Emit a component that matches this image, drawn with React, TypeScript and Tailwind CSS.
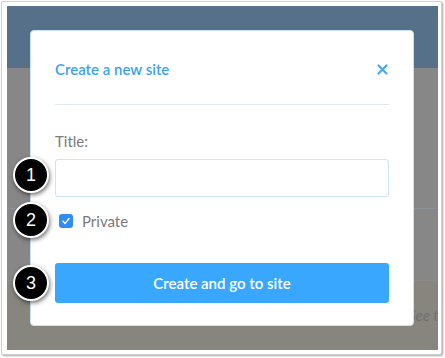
import React from 'react';

const Callout: React.FC<{ n: number; top: string }> = ({ n, top }) => (
  <div
    className={`absolute left-[6px] ${top} w-[36px] h-[36px] rounded-full bg-black border-2 border-white shadow-[1px_2px_4px_rgba(0,0,0,0.55)] flex items-center justify-center text-white text-[18px] font-['Liberation_Sans',sans-serif]`}
  >
    {n}
  </div>
);

const App: React.FC = () => {
  return (
    <div className="w-[445px] h-[358px] bg-white pl-[1px] pt-[1px] font-['Lato',sans-serif]">
      <div className="w-[441px] h-[354px] bg-white border border-[#cfcfcf] rounded-[2px] shadow-[1px_1px_2px_rgba(0,0,0,0.35)] pl-[5px] pt-[4px]">
        <div className="relative w-[431px] h-[344px] overflow-hidden bg-[#878787]">
          {/* page behind the dialog */}
          <div className="h-[62px] bg-[#557088]" />
          <div className="h-[140px]" />
          <div className="h-[72px] border-t border-[#8a9099]" />
          <div className="h-[70px] border-t border-[#8c8c84] bg-[#86867f] pl-[401px] pt-[23px] text-[15px] italic text-[#707070] whitespace-nowrap">
            See the
          </div>

          {/* dialog */}
          <div className="absolute left-[23px] top-[24px] w-[384px] h-[296px] bg-white border border-[#c9e2f6] rounded-[4px] px-[24px]">
            <div className="flex items-center justify-between pt-[29px] pb-[26px] border-b border-[#dfe8ef]">
              <span className="text-[15px] leading-[18px] font-semibold text-[#3ba2f2]">Create a new site</span>
              <svg width="11" height="11" viewBox="0 0 11 11" className="mr-[1px]">
                <path d="M1.5 1.5 L9.5 9.5 M9.5 1.5 L1.5 9.5" stroke="#4ba7f2" strokeWidth="2.2" strokeLinecap="round" />
              </svg>
            </div>
            <div className="mt-[26px] text-[15px] leading-[20px] text-[#7a7a7a]">Title:</div>
            <input
              type="text"
              className="mt-[8px] block w-full h-[38px] border border-[#cde3f6] rounded-[3px] outline-none px-3"
            />
            <div className="mt-[14px] flex items-center h-[20px]">
              <div className="ml-[4px] w-[14px] h-[14px] rounded-[3px] bg-[#2f8bf5] flex items-center justify-center">
                <svg width="10" height="10" viewBox="0 0 10 10">
                  <path d="M2 5.2 L4.1 7.4 L8 2.6" stroke="white" strokeWidth="1.5" fill="none" strokeLinecap="round" strokeLinejoin="round" />
                </svg>
              </div>
              <span className="ml-[9px] text-[15px] text-[#7a7a7a]">Private</span>
            </div>
            <button className="mt-[32px] w-full h-[40px] rounded-[3px] bg-[#38a7fd] text-white text-[15px] font-semibold">
              Create and go to site
            </button>
          </div>

          <Callout n={1} top="top-[151px]" />
          <Callout n={2} top="top-[196px]" />
          <Callout n={3} top="top-[259px]" />
        </div>
      </div>
    </div>
  );
};

export default App;
